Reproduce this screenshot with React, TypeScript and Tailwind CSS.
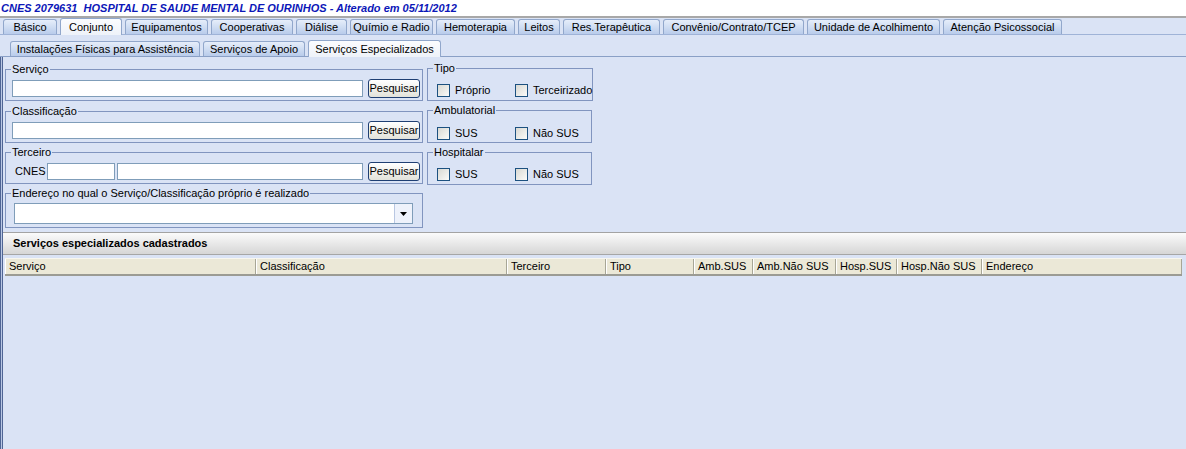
import type { ReactNode } from "react";

const mainTabs: [string, number][] = [
  ["Básico", 54],
  ["Conjunto", 62],
  ["Equipamentos", 83],
  ["Cooperativas", 82],
  ["Diálise", 51],
  ["Químio e Radio", 83],
  ["Hemoterapia", 79],
  ["Leitos", 42],
  ["Res.Terapêutica", 97],
  ["Convênio/Contrato/TCEP", 141],
  ["Unidade de Acolhimento", 133],
  ["Atenção Psicossocial", 119],
];

const subTabs: [string, number][] = [
  ["Instalações Físicas para Assistência", 190],
  ["Serviços de Apoio", 102],
  ["Serviços Especializados", 133],
];

const columns: [string, number][] = [
  ["Serviço", 251],
  ["Classificação", 251],
  ["Terceiro", 99],
  ["Tipo", 88],
  ["Amb.SUS", 59],
  ["Amb.Não SUS", 83],
  ["Hosp.SUS", 61],
  ["Hosp.Não SUS", 85],
  ["Endereço", 200],
];

function Tab({ label, width, active }: { label: string; width: number; active: boolean }) {
  return (
    <div
      style={{ width }}
      className={
        active
          ? "relative z-10 -mb-px flex h-[17px] items-center justify-center rounded-t-[3px] border border-b-0 border-[#91a7cb] bg-gradient-to-b from-[#fbfcfe] to-[#eef2f9] leading-none"
          : "flex h-[15px] items-center justify-center rounded-t-[3px] border border-b-0 border-[#91a7cb] bg-gradient-to-b from-[#e6eefa] to-[#b9cceb] leading-none"
      }
    >
      {label}
    </div>
  );
}

function Group({ title, className, children }: { title: string; className?: string; children: ReactNode }) {
  return (
    <fieldset className={`border border-[#8195bf] ${className ?? ""}`}>
      <legend className="ml-[5px] px-px leading-[13px]">{title}</legend>
      {children}
    </fieldset>
  );
}

function Input({ className }: { className: string }) {
  return <div className={`border border-[#7f9db9] bg-white ${className}`} />;
}

function SearchButton() {
  return (
    <button className="flex h-[19px] w-[52px] items-center justify-center rounded-[3px] border border-[#1f3f73] bg-gradient-to-b from-white to-[#e2e2da] leading-none">
      Pesquisar
    </button>
  );
}

function Check({ label, width }: { label: string; width?: number }) {
  return (
    <div style={{ width }} className="flex items-center gap-[5px]">
      <span className="h-[13px] w-[13px] border border-[#1c5180] bg-gradient-to-br from-[#d9d9d3] to-[#fbfbf9]" />
      <span className="leading-none">{label}</span>
    </div>
  );
}

export default function App() {
  return (
    <div className="h-[449px] w-[1186px] overflow-hidden bg-white font-['Liberation_Sans',Arial,sans-serif] text-[11px] text-black">
      <div className="h-[16px] whitespace-pre pl-px pt-px text-[11px] font-bold italic leading-[14px] text-[#0c17b8]">
        CNES 2079631  HOSPITAL DE SAUDE MENTAL DE OURINHOS - Alterado em 05/11/2012
      </div>

      <div className="flex h-[433px] flex-col border-t-2 border-[#a8a8a8] bg-[#dae3f5]">
        {/* main tabs */}
        <div className="flex h-[17px] items-end gap-[3px] border-b border-[#9fb3d7] pl-[3px]">
          {mainTabs.map(([label, w]) => (
            <Tab key={label} label={label} width={w} active={label === "Conjunto"} />
          ))}
        </div>

        {/* sub tabs */}
        <div className="mt-[4px] flex h-[18px] items-end gap-[3px] border-b border-[#8aa0c6] pl-[10px]">
          {subTabs.map(([label, w]) => (
            <Tab key={label} label={label} width={w} active={label === "Serviços Especializados"} />
          ))}
        </div>

        <div className="flex flex-1 border-l border-[#4f6595] bg-[#b9c7e4] pl-px">
          <div className="flex flex-1 flex-col border-l border-[#4f6595] bg-[#dae3f5]">
            {/* form */}
            <div className="flex items-start pl-[2px]">
              <div className="mt-[6px] flex w-[418px] flex-col">
                <Group title="Serviço" className="h-[38px]">
                  <div className="flex items-center pl-[6px] pr-[2px] pt-[3px]">
                    <Input className="h-[17px] w-[351px]" />
                    <div className="ml-auto">
                      <SearchButton />
                    </div>
                  </div>
                </Group>
                <Group title="Classificação" className="mt-[4px] h-[38px]">
                  <div className="flex items-center pl-[6px] pr-[2px] pt-[3px]">
                    <Input className="h-[17px] w-[351px]" />
                    <div className="ml-auto">
                      <SearchButton />
                    </div>
                  </div>
                </Group>
                <Group title="Terceiro" className="mt-[3px] h-[38px]">
                  <div className="flex items-center pl-[9px] pr-[2px] pt-[3px]">
                    <span className="w-[32px] leading-none">CNES</span>
                    <Input className="h-[17px] w-[68px]" />
                    <Input className="ml-[2px] h-[17px] w-[246px]" />
                    <div className="ml-auto">
                      <SearchButton />
                    </div>
                  </div>
                </Group>
                <Group title="Endereço no qual o Serviço/Classificação próprio é realizado" className="mt-[3px] h-[41px]">
                  <div className="pl-[8px] pr-[9px] pt-[3px]">
                    <div className="flex h-[21px] border border-[#7f9db9] bg-white">
                      <div className="flex-1" />
                      <div className="flex w-[18px] items-center justify-center border-l border-[#b9c7e2] bg-[#eef2fb]">
                        <svg width="7" height="4" viewBox="0 0 7 4">
                          <path d="M0 0h7L3.5 4z" fill="#000" />
                        </svg>
                      </div>
                    </div>
                  </div>
                </Group>
              </div>

              <div className="ml-[4px] mt-[5px] flex w-[165px] flex-col">
                <Group title="Tipo" className="h-[39px]">
                  <div className="flex items-center pl-[9px] pt-[9px]">
                    <Check label="Próprio" width={78} />
                    <Check label="Terceirizado" />
                  </div>
                </Group>
                <Group title="Ambulatorial" className="mt-[3px] h-[39px]">
                  <div className="flex items-center pl-[9px] pt-[10px]">
                    <Check label="SUS" width={78} />
                    <Check label="Não SUS" />
                  </div>
                </Group>
                <Group title="Hospitalar" className="mt-[3px] h-[39px]">
                  <div className="flex items-center pl-[9px] pt-[9px]">
                    <Check label="SUS" width={78} />
                    <Check label="Não SUS" />
                  </div>
                </Group>
              </div>
            </div>

            {/* list */}
            <div className="mt-[4px] border-t border-[#a3a3a3]">
              <div className="flex h-[22px] items-center border-b border-[#a6a6a6] bg-gradient-to-b from-[#fbfbfb] to-[#d6d6d6] pl-[10px] font-bold">
                Serviços especializados cadastrados
              </div>
              <div className="ml-[2px] mt-[3px] flex h-[18px] w-[1177px] border-b-2 border-t border-[#9b9b93] border-t-[#f7f6ef] bg-[#ebe8d7]">
                {columns.map(([label, w]) => (
                  <div
                    key={label}
                    style={{ width: w }}
                    className="flex items-center border-r border-[#a7a696] pl-[4px] leading-none shadow-[inset_1px_0_0_#fff]"
                  >
                    {label}
                  </div>
                ))}
              </div>
            </div>
          </div>
        </div>
      </div>
    </div>
  );
}
